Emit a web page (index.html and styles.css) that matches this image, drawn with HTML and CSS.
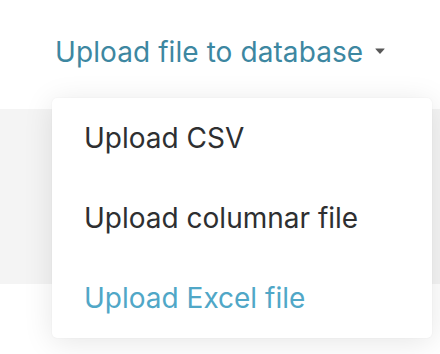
FILE: index.html
```html
<!DOCTYPE html>
<html>
<head>
<meta charset="utf-8">
<link rel="stylesheet" href="styles.css">
</head>
<body>
<div class="page">
  <header class="header">
    <button class="trigger">
      <span class="trigger-label">Upload file to database</span>
      <svg class="caret" width="10" height="6" viewBox="0 0 10 6"><path d="M0.6 0.4 H9.4 Q9.9 0.4 9.5 0.9 L5.5 5.4 Q5 5.9 4.5 5.4 L0.5 0.9 Q0.1 0.4 0.6 0.4 Z" fill="#585858"/></svg>
    </button>
  </header>
  <div class="band"></div>
  <div class="rest"></div>
  <ul class="menu">
    <li class="menu-item">Upload CSV</li>
    <li class="menu-item">Upload columnar file</li>
    <li class="menu-item menu-item-active">Upload Excel file</li>
  </ul>
</div>
</body>
</html>
```

FILE: styles.css
```css
* { box-sizing: border-box; }
html, body {
  margin: 0;
  padding: 0;
  background: #ffffff;
  font-family: Inter, "Noto Sans", sans-serif;
}
.page {
  position: relative;
  width: 440px;
  height: 354px;
  overflow: hidden;
}
.header {
  height: 109px;
  padding: 35px 0 0 55px;
}
.trigger {
  display: flex;
  align-items: center;
  gap: 12px;
  border: 0;
  background: none;
  padding: 0;
  font: inherit;
  cursor: pointer;
}
.trigger-label {
  font-size: 28px;
  line-height: 34px;
  letter-spacing: 0.08px;
  color: #3d87a1;
}
.caret {
  display: block;
  margin-bottom: 3px;
}
.band {
  height: 175px;
  background: #f4f4f4;
}
.rest {
  height: 70px;
}
.menu {
  position: absolute;
  left: 52px;
  top: 98px;
  width: 380px;
  margin: 0;
  padding: 0;
  list-style: none;
  background: #ffffff;
  border-radius: 5px;
  box-shadow: 0 4px 30px rgba(0, 0, 0, 0.1), 0 0 2px rgba(0, 0, 0, 0.06);
}
.menu-item {
  height: 80px;
  display: flex;
  align-items: center;
  padding-left: 32px;
  font-size: 28px;
  line-height: 34px;
  color: #2e2f31;
}
.menu-item-active {
  color: #50a7c7;
}
```
